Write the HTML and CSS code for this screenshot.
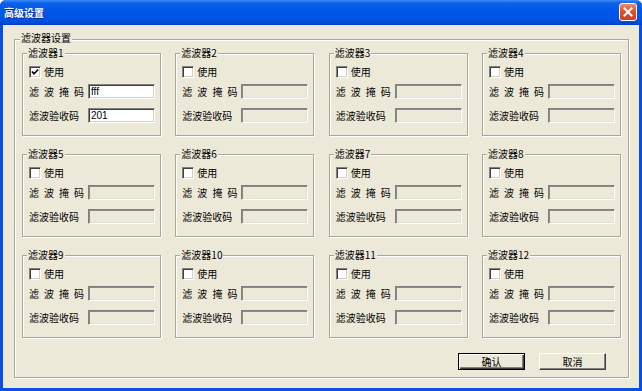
FILE: index.html
```html
<!DOCTYPE html>
<html lang="zh-CN">
<head>
<meta charset="utf-8">
<title>高级设置</title>
<link rel="stylesheet" href="styles.css">
</head>
<body>
<div class="window">
  <div class="titlebar">
    <span class="title">高级设置</span>
    <span class="close"><svg width="10" height="10" viewBox="0 0 10 10"><path d="M1.5 1.5 L8.5 8.5 M8.5 1.5 L1.5 8.5" stroke="#fff" stroke-width="2" stroke-linecap="square"/></svg></span>
  </div>
  <div class="client">
    <div class="outer">
      <span class="legend outer-legend">滤波器设置</span>
      <div class="grid">
        <div class="group">
          <span class="legend">滤波器1</span>
          <div class="check-row"><span class="checkbox"><svg width="10" height="10" viewBox="0 0 10 10"><path d="M2 4.5 L4 6.8 L8.2 2.5" fill="none" stroke="#000" stroke-width="1.7"/></svg></span><span class="txt">使用</span></div>
          <div class="field-row"><span class="lbl">滤 波 掩 码</span><span class="input on">fff</span></div>
          <div class="field-row second"><span class="lbl">滤波验收码</span><span class="input on">201</span></div>
        </div>
        <div class="group">
          <span class="legend">滤波器2</span>
          <div class="check-row"><span class="checkbox"></span><span class="txt">使用</span></div>
          <div class="field-row"><span class="lbl">滤 波 掩 码</span><span class="input"></span></div>
          <div class="field-row second"><span class="lbl">滤波验收码</span><span class="input"></span></div>
        </div>
        <div class="group">
          <span class="legend">滤波器3</span>
          <div class="check-row"><span class="checkbox"></span><span class="txt">使用</span></div>
          <div class="field-row"><span class="lbl">滤 波 掩 码</span><span class="input"></span></div>
          <div class="field-row second"><span class="lbl">滤波验收码</span><span class="input"></span></div>
        </div>
        <div class="group">
          <span class="legend">滤波器4</span>
          <div class="check-row"><span class="checkbox"></span><span class="txt">使用</span></div>
          <div class="field-row"><span class="lbl">滤 波 掩 码</span><span class="input"></span></div>
          <div class="field-row second"><span class="lbl">滤波验收码</span><span class="input"></span></div>
        </div>
        <div class="group">
          <span class="legend">滤波器5</span>
          <div class="check-row"><span class="checkbox"></span><span class="txt">使用</span></div>
          <div class="field-row"><span class="lbl">滤 波 掩 码</span><span class="input"></span></div>
          <div class="field-row second"><span class="lbl">滤波验收码</span><span class="input"></span></div>
        </div>
        <div class="group">
          <span class="legend">滤波器6</span>
          <div class="check-row"><span class="checkbox"></span><span class="txt">使用</span></div>
          <div class="field-row"><span class="lbl">滤 波 掩 码</span><span class="input"></span></div>
          <div class="field-row second"><span class="lbl">滤波验收码</span><span class="input"></span></div>
        </div>
        <div class="group">
          <span class="legend">滤波器7</span>
          <div class="check-row"><span class="checkbox"></span><span class="txt">使用</span></div>
          <div class="field-row"><span class="lbl">滤 波 掩 码</span><span class="input"></span></div>
          <div class="field-row second"><span class="lbl">滤波验收码</span><span class="input"></span></div>
        </div>
        <div class="group">
          <span class="legend">滤波器8</span>
          <div class="check-row"><span class="checkbox"></span><span class="txt">使用</span></div>
          <div class="field-row"><span class="lbl">滤 波 掩 码</span><span class="input"></span></div>
          <div class="field-row second"><span class="lbl">滤波验收码</span><span class="input"></span></div>
        </div>
        <div class="group">
          <span class="legend">滤波器9</span>
          <div class="check-row"><span class="checkbox"></span><span class="txt">使用</span></div>
          <div class="field-row"><span class="lbl">滤 波 掩 码</span><span class="input"></span></div>
          <div class="field-row second"><span class="lbl">滤波验收码</span><span class="input"></span></div>
        </div>
        <div class="group">
          <span class="legend">滤波器10</span>
          <div class="check-row"><span class="checkbox"></span><span class="txt">使用</span></div>
          <div class="field-row"><span class="lbl">滤 波 掩 码</span><span class="input"></span></div>
          <div class="field-row second"><span class="lbl">滤波验收码</span><span class="input"></span></div>
        </div>
        <div class="group">
          <span class="legend">滤波器11</span>
          <div class="check-row"><span class="checkbox"></span><span class="txt">使用</span></div>
          <div class="field-row"><span class="lbl">滤 波 掩 码</span><span class="input"></span></div>
          <div class="field-row second"><span class="lbl">滤波验收码</span><span class="input"></span></div>
        </div>
        <div class="group">
          <span class="legend">滤波器12</span>
          <div class="check-row"><span class="checkbox"></span><span class="txt">使用</span></div>
          <div class="field-row"><span class="lbl">滤 波 掩 码</span><span class="input"></span></div>
          <div class="field-row second"><span class="lbl">滤波验收码</span><span class="input"></span></div>
        </div>
      </div>
      <div class="buttons">
        <span class="btn default">确认</span>
        <span class="btn">取消</span>
      </div>
    </div>
  </div>
</div>
</body>
</html>
```
FILE: styles.css
```css
html, body {
  margin: 0;
  padding: 0;
  background: #ffffff;
}
body {
  font-family: "Noto Sans CJK SC", "Liberation Sans", sans-serif;
  font-size: 10px;
  color: #000;
}
.window {
  width: 642px;
  height: 391px;
  box-sizing: border-box;
  background: #0a4fe0;
  border-radius: 6px 6px 0 0;
  overflow: hidden;
  display: flex;
  flex-direction: column;
}
.titlebar {
  height: 25px;
  flex: none;
  display: flex;
  align-items: center;
  justify-content: space-between;
  padding: 0 5px 0 4px;
  background: linear-gradient(to bottom, #3d8ef8 0%, #0a62ec 12%, #0058e8 40%, #0054e3 75%, #0049d6 92%, #003ec4 100%);
}
.title {
  color: #fff;
  font-weight: bold;
  font-size: 10px;
  line-height: 10px;
  text-shadow: 1px 1px 0 #0a2d8e;
}
.close {
  width: 16px;
  height: 16px;
  margin-top: -1px;
  border: 1px solid #fff;
  border-radius: 3px;
  background: linear-gradient(to bottom, #f08a6c 0%, #e2502e 45%, #d13f1c 100%);
  display: flex;
  align-items: center;
  justify-content: center;
}
.client {
  flex: 1;
  margin: 0 3px 3px 3px;
  background: #ece9d8;
  padding: 14px 10px 0 11px;
}
.outer {
  position: relative;
  border: 1px solid #aaa79a;
  box-shadow: inset 1px 1px 0 #fff, 1px 1px 0 #fff;
  padding: 13px 6px 7px 7px;
}
.legend {
  position: absolute;
  top: -6px;
  left: 4px;
  padding: 0 1px;
  background: #ece9d8;
  line-height: 10px;
  white-space: nowrap;
}
.outer-legend {
  top: -7px;
  left: 5px;
}
.grid {
  display: grid;
  grid-template-columns: repeat(4, 139px);
  grid-auto-rows: 83px;
  column-gap: 14.33px;
  row-gap: 18px;
}
.group {
  position: relative;
  box-sizing: border-box;
  border: 1px solid #aaa79a;
  box-shadow: inset 1px 1px 0 #fff, 1px 1px 0 #fff;
  padding: 12px 4px 0 6px;
  display: flex;
  flex-direction: column;
}
.check-row {
  height: 12px;
  display: flex;
  align-items: center;
  gap: 3px;
  margin-bottom: 6px;
}
.checkbox {
  width: 12px;
  height: 12px;
  box-sizing: border-box;
  background: #fff;
  border-style: solid;
  border-width: 1px;
  border-color: #808080 #fff #fff #808080;
  box-shadow: inset 1px 1px 0 #404040, inset -1px -1px 0 #d4d0c8;
  display: flex;
  align-items: center;
  justify-content: center;
}
.checkbox svg {
  display: block;
}
.txt {
  line-height: 10px;
}
.field-row {
  height: 15px;
  display: flex;
  align-items: center;
}
.field-row.second {
  margin-top: 9px;
}
.lbl {
  width: 59px;
  flex: none;
  line-height: 10px;
  word-spacing: 2.8px;
  white-space: pre;
}
.input {
  width: 67px;
  height: 15px;
  box-sizing: border-box;
  border-style: solid;
  border-width: 1px;
  border-color: #808080 #fff #fff #808080;
  box-shadow: inset 1px 1px 0 #8c8a80, inset -1px -1px 0 #e4e1d2;
  background: #ece9d8;
  font-family: "Liberation Sans", sans-serif;
  font-size: 10px;
  line-height: 13px;
  padding-left: 2px;
}
.input.on {
  background: #fff;
  box-shadow: inset 1px 1px 0 #404040, inset -1px -1px 0 #d4d0c8;
}
.buttons {
  display: flex;
  justify-content: flex-end;
  gap: 14px;
  margin-top: 15px;
  padding-right: 16px;
}
.btn {
  width: 67px;
  height: 17px;
  box-sizing: border-box;
  border-style: solid;
  border-width: 1px;
  border-color: #fff #404040 #404040 #fff;
  box-shadow: inset -1px -1px 0 #808080;
  background: #ece9d8;
  display: flex;
  align-items: center;
  justify-content: center;
  line-height: 10px;
}
.btn.default {
  border: 1px solid #000;
  box-shadow: inset 1px 1px 0 #fff, inset -1px -1px 0 #404040, inset -2px -2px 0 #808080;
}
```
